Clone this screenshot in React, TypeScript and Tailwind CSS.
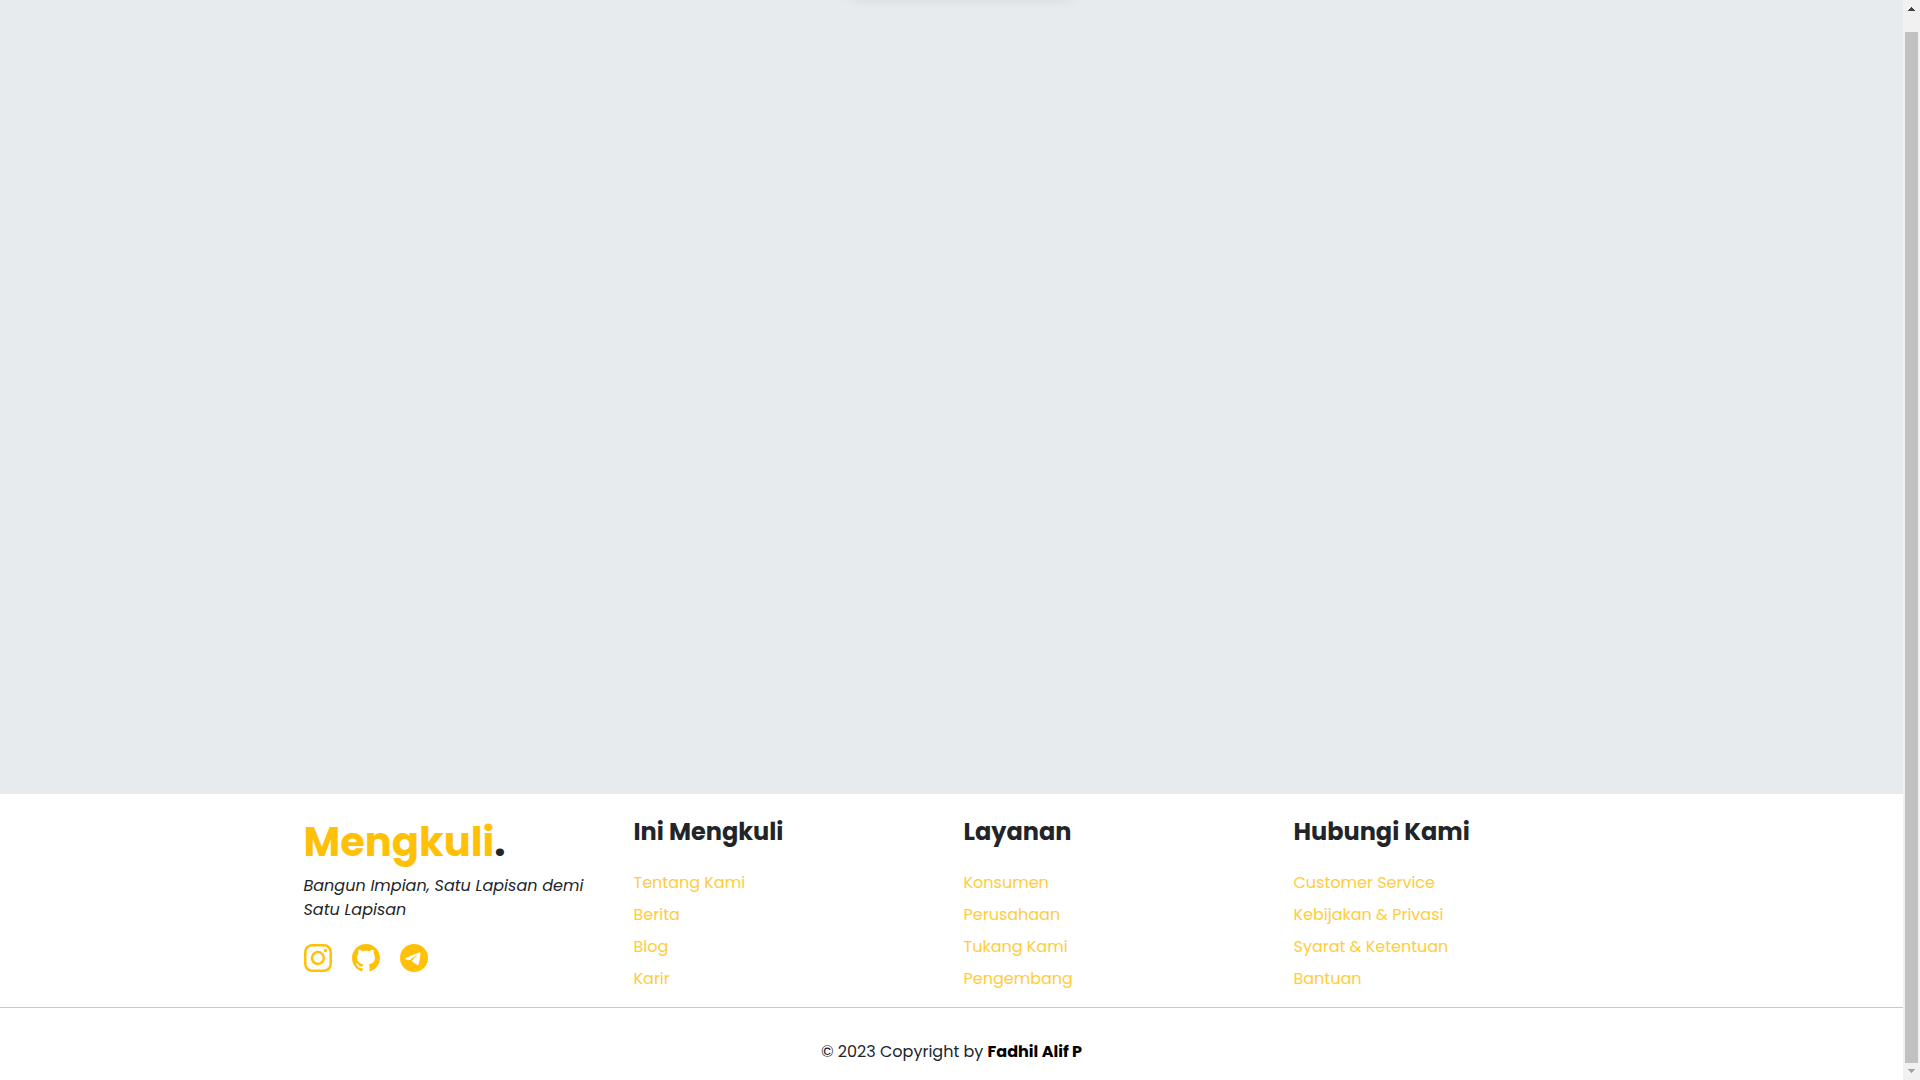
import { BsGithub, BsInstagram, BsTelegram } from "react-icons/bs";

const columns = [
  { title: "Ini Mengkuli", links: ["Tentang Kami", "Berita", "Blog", "Karir"] },
  { title: "Layanan", links: ["Konsumen", "Perusahaan", "Tukang Kami", "Pengembang"] },
  {
    title: "Hubungi Kami",
    links: ["Customer Service", "Kebijakan & Privasi", "Syarat & Ketentuan", "Bantuan"],
  },
];

const socials = [
  { label: "Instagram", Icon: BsInstagram },
  { label: "GitHub", Icon: BsGithub },
  { label: "Telegram", Icon: BsTelegram },
];

function Scrollbar() {
  return (
    <div aria-hidden="true" className="sticky top-0 flex h-screen w-[17px] shrink-0 flex-col items-center bg-[#f1f1f1]">
      <svg className="h-8 w-[17px] shrink-0" viewBox="0 0 17 32" shapeRendering="crispEdges">
        <path d="M8 7h1v1h1v1h1v1h1v1H5v-1h1V9h1V8h1z" fill="#404040" />
      </svg>
      <div className="w-[13px] grow bg-[#c1c1c1]" />
      <svg className="h-[17px] w-[17px] shrink-0" viewBox="0 0 17 17" shapeRendering="crispEdges">
        <path d="M5 6h7v1h-1v1h-1v1H9v1H8V9H7V8H6V7H5z" fill="#a3a3a3" />
      </svg>
    </div>
  );
}

export default function App() {
  return (
    <div className="flex min-h-screen bg-white font-[Poppins,Inter,sans-serif] text-base text-[#212529]">
      <div className="flex min-w-0 grow flex-col">
        <main className="flex grow justify-center overflow-hidden bg-[#e7ebee]">
          <div className="-mt-7 ml-5 h-4 w-56 rounded-md shadow-[0_8px_16px_rgba(0,0,0,0.12)]" />
        </main>
        <footer>
          <div className="mx-auto grid max-w-[1320px] grid-cols-4 pt-6 pb-4">
            <div className="px-3">
              <h2 className="text-[40px] leading-12 font-bold">
                <span className="text-[#ffc107]">Mengkuli</span>.
              </h2>
              <p className="mt-2 leading-6 italic">Bangun Impian, Satu Lapisan demi Satu Lapisan</p>
              <div className="mt-[22px] flex gap-5 text-[28px] text-[#ffc107]">
                {socials.map(({ label, Icon }) => (
                  <a key={label} href="#" aria-label={label}>
                    <Icon />
                  </a>
                ))}
              </div>
            </div>
            {columns.map((column) => (
              <div key={column.title} className="px-3">
                <h3 className="text-2xl leading-7 font-bold">{column.title}</h3>
                <ul className="mt-[25px] flex flex-col gap-2">
                  {column.links.map((link) => (
                    <li key={link} className="leading-6">
                      <a href="#" className="text-[#ffcd39]">
                        {link}
                      </a>
                    </li>
                  ))}
                </ul>
              </div>
            ))}
          </div>
          <hr className="border-t border-[#c8c9ca]" />
          <p className="pt-8 pb-4 text-center leading-6">
            © 2023 Copyright by{" "}
            <a href="#" className="font-bold text-black">
              Fadhil Alif P
            </a>
          </p>
        </footer>
      </div>
      <Scrollbar />
    </div>
  );
}
